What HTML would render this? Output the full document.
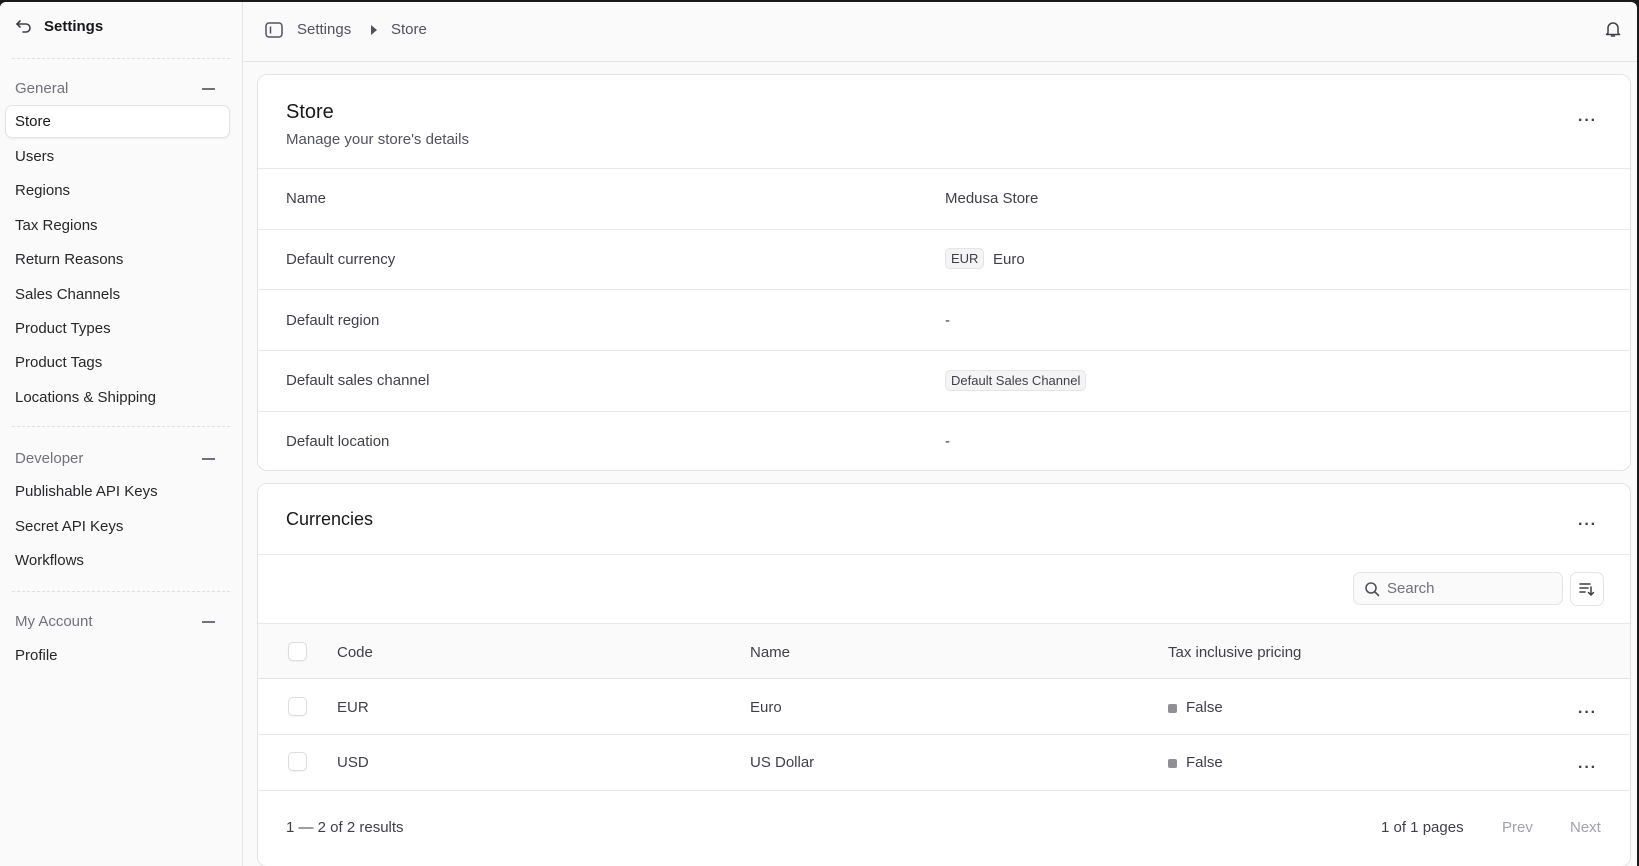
<!DOCTYPE html>
<html><head><meta charset="utf-8"><style>
*{box-sizing:border-box;margin:0;padding:0}
body{width:1639px;height:866px;overflow:hidden;background:#1a1a1a;font-family:"Liberation Sans",sans-serif;color:#18181b;position:relative}
.app{position:absolute;left:0;top:2px;width:1637px;height:864px;background:#fafafa;border-radius:6px 6px 0 0;overflow:hidden}
.side{position:absolute;left:0;top:0;width:243px;height:100%;border-right:1px solid #e4e4e7;background:#fafafa}
.abs{position:absolute;white-space:nowrap}
.sep{position:absolute;left:12px;width:218px;border-top:1px dashed #e0e0e3}
.grp{color:#71717a;font-size:15px}
.it{font-size:15px;color:#27272a;left:15px}
.dash{position:absolute;left:202px;width:13px;height:2px;background:#71717a}
.card{position:absolute;left:257px;width:1374px;background:#fff;border:1px solid #e4e4e7;border-radius:10px;overflow:hidden}
.hl{position:absolute;left:0;right:0;border-top:1px solid #e8e8ea}
.t15{font-size:15px;color:#3f3f46}
.badge{position:absolute;border:1px solid #e4e4e7;background:#f4f4f5;border-radius:5px;font-size:13px;color:#3f3f46;padding:2px 5px}
.dots{position:absolute;font-size:16px;letter-spacing:1px;color:#3f3f46;font-weight:bold}
.cb{position:absolute;left:30px;width:19px;height:19px;border:1px solid #dcdce0;border-radius:5px;background:#fff;box-shadow:0 1px 1px rgba(0,0,0,.05)}
.sq{position:absolute;width:9px;height:9px;border-radius:2px;background:#8f8f95}
</style></head><body>
<div class="app">
<div class="side">
 <svg class="abs" style="left:15px;top:17px" width="18" height="16" viewBox="0 0 18 16" fill="none" stroke="#3f3f46" stroke-width="1.6" stroke-linecap="round" stroke-linejoin="round"><path d="M5 2L2 5l3 3"/><path d="M2 5h9a4 4 0 010 8H8"/></svg>
 <div class="abs" style="left:44px;top:16px;font-size:15px;font-weight:bold;color:#18181b">Settings</div>
 <div class="sep" style="top:56px"></div>
 <div class="abs grp" style="left:15px;top:78px">General</div><div class="dash" style="top:86px"></div>
 <div class="abs" style="left:5px;top:103px;width:225px;height:33px;background:#fff;border:1px solid #e4e4e7;border-radius:7px;box-shadow:0 1px 2px rgba(0,0,0,.06)"></div>
 <div class="abs it" style="top:111px;color:#18181b">Store</div>
 <div class="abs it" style="top:146px">Users</div>
 <div class="abs it" style="top:180px">Regions</div>
 <div class="abs it" style="top:215px">Tax Regions</div>
 <div class="abs it" style="top:249px">Return Reasons</div>
 <div class="abs it" style="top:284px">Sales Channels</div>
 <div class="abs it" style="top:318px">Product Types</div>
 <div class="abs it" style="top:352px">Product Tags</div>
 <div class="abs it" style="top:387px">Locations &amp; Shipping</div>
 <div class="sep" style="top:424px"></div>
 <div class="abs grp" style="left:15px;top:448px">Developer</div><div class="dash" style="top:456px"></div>
 <div class="abs it" style="top:481px">Publishable API Keys</div>
 <div class="abs it" style="top:516px">Secret API Keys</div>
 <div class="abs it" style="top:550px">Workflows</div>
 <div class="sep" style="top:589px"></div>
 <div class="abs grp" style="left:15px;top:611px">My Account</div><div class="dash" style="top:619px"></div>
 <div class="abs it" style="top:645px">Profile</div>
</div>
<div class="abs" style="left:244px;top:0;right:0;height:60px;border-bottom:1px solid #e4e4e7"></div>
<svg class="abs" style="left:265px;top:20px" width="18" height="16" viewBox="0 0 18 16" fill="none" stroke="#52525b" stroke-width="1.5"><rect x="1" y="1" width="16" height="14" rx="3"/><path d="M5.5 4.5v7"/></svg>
<div class="abs" style="left:297px;top:19px;font-size:15px;color:#52525b">Settings</div>
<svg class="abs" style="left:370px;top:23px" width="8" height="10"><path d="M1 0l6 5-6 5z" fill="#52525b"/></svg>
<div class="abs" style="left:391px;top:19px;font-size:15px;color:#52525b">Store</div>
<svg class="abs" style="left:1604px;top:18px" width="18" height="18" viewBox="0 0 18 18" fill="none" stroke="#3f3f46" stroke-width="1.5" stroke-linejoin="round"><path d="M4 13V8a5 5 0 0110 0v5l1.5 1.5h-13z"/><path d="M7.5 16h3" stroke-linecap="round"/></svg>

<div class="card" style="top:72px;height:397px">
 <div class="abs" style="left:28px;top:26px;font-size:20px;color:#18181b">Store</div>
 <div class="abs t15" style="left:28px;top:56px;color:#52525b">Manage your store's details</div>
 <div class="dots" style="left:1320px;top:37px">···</div>
 <div class="hl" style="top:93px"></div>
 <div class="abs t15" style="left:28px;top:115px">Name</div><div class="abs t15" style="left:687px;top:115px">Medusa Store</div>
 <div class="hl" style="top:154px"></div>
 <div class="abs t15" style="left:28px;top:176px">Default currency</div>
 <div class="badge" style="left:687px;top:173px">EUR</div><div class="abs t15" style="left:735px;top:176px">Euro</div>
 <div class="hl" style="top:214px"></div>
 <div class="abs t15" style="left:28px;top:237px">Default region</div><div class="abs t15" style="left:687px;top:237px">-</div>
 <div class="hl" style="top:275px"></div>
 <div class="abs t15" style="left:28px;top:297px">Default sales channel</div>
 <div class="badge" style="left:687px;top:295px">Default Sales Channel</div>
 <div class="hl" style="top:336px"></div>
 <div class="abs t15" style="left:28px;top:358px">Default location</div><div class="abs t15" style="left:687px;top:358px">-</div>
</div>

<div class="card" style="top:481px;height:384px">
 <div class="abs" style="left:28px;top:25px;font-size:18px;color:#18181b">Currencies</div>
 <div class="dots" style="left:1320px;top:32px">···</div>
 <div class="hl" style="top:70px"></div>
 <div class="abs" style="left:1095px;top:88px;width:210px;height:33px;border:1px solid #e4e4e7;border-radius:7px;background:#fafafa"></div>
 <svg class="abs" style="left:1106px;top:97px" width="16" height="16" viewBox="0 0 16 16" fill="none" stroke="#52525b" stroke-width="1.6"><circle cx="7" cy="7" r="5"/><path d="M11 11l3.5 3.5" stroke-linecap="round"/></svg>
 <div class="abs" style="left:1129px;top:96px;font-size:15px;color:#71717a">Search</div>
 <div class="abs" style="left:1312px;top:88px;width:34px;height:34px;border:1px solid #e4e4e7;border-radius:7px;background:#fff"></div>
 <svg class="abs" style="left:1321px;top:97px" width="16" height="16" viewBox="0 0 16 16" fill="none" stroke="#3f3f46" stroke-width="1.5" stroke-linecap="round"><path d="M1 3h10M1 7h8M1 11h5M12 6v8M9.5 11.5L12 14l2.5-2.5"/></svg>
 <div class="abs" style="left:0;right:0;top:139px;height:56px;background:#fafafa;border-top:1px solid #e8e8ea;border-bottom:1px solid #e4e4e7"></div>
 <div class="cb" style="top:158px"></div>
 <div class="abs t15" style="left:79px;top:160px">Code</div>
 <div class="abs t15" style="left:492px;top:160px">Name</div>
 <div class="abs t15" style="left:910px;top:160px">Tax inclusive pricing</div>
 <div class="cb" style="top:213px"></div>
 <div class="abs t15" style="left:79px;top:215px">EUR</div><div class="abs t15" style="left:492px;top:215px">Euro</div>
 <div class="sq" style="left:910px;top:220px"></div><div class="abs t15" style="left:928px;top:215px">False</div>
 <div class="dots" style="left:1320px;top:220px">···</div>
 <div class="hl" style="top:250px"></div>
 <div class="cb" style="top:268px"></div>
 <div class="abs t15" style="left:79px;top:270px">USD</div><div class="abs t15" style="left:492px;top:270px">US Dollar</div>
 <div class="sq" style="left:910px;top:275px"></div><div class="abs t15" style="left:928px;top:270px">False</div>
 <div class="dots" style="left:1320px;top:275px">···</div>
 <div class="hl" style="top:306px"></div>
 <div class="abs t15" style="left:28px;top:335px">1 — 2 of 2 results</div>
 <div class="abs t15" style="left:1123px;top:335px">1 of 1 pages</div>
 <div class="abs t15" style="left:1244px;top:335px;color:#a1a1aa">Prev</div>
 <div class="abs t15" style="left:1312px;top:335px;color:#a1a1aa">Next</div>
</div>
</div>
</body></html>
